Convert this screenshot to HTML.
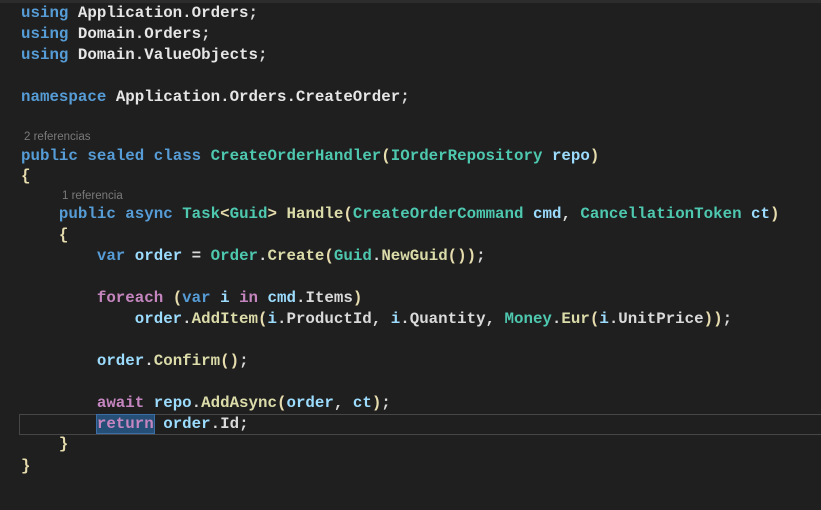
<!DOCTYPE html>
<html><head><meta charset="utf-8"><style>
html,body{margin:0;padding:0;background:#1f1f1f;width:821px;height:510px;overflow:hidden;position:relative}
.top{position:absolute;left:0;top:0;width:821px;height:3px;background:#2c2c2c}
.l{position:absolute;left:21px;font-family:"Liberation Mono",monospace;font-size:15.8px;font-weight:bold;line-height:21px;height:21px;white-space:pre;color:#dadada;letter-spacing:0}
.cl{position:absolute;font-family:"Liberation Sans",sans-serif;font-size:11.5px;color:#7a7a7a;white-space:pre}
.k{color:#569cd6}.t{color:#4ec9b0}.m{color:#dcdcaa}.v{color:#9cdcfe}.c{color:#c586c0}.w{color:#e6e6e6}
.b1,.b2,.b3{color:#e6dcae}
.cur{position:absolute;left:19px;top:414px;width:810px;height:19px;border:1px solid #464646}
.sel{background:#264f78;outline:1px solid #3a6ea5}
</style></head><body>
<div class="top"></div>
<div class="cur"></div>
<div class="l" style="top:3px"><span class="k">using</span> <span class="w">Application.Orders</span>;</div>
<div class="l" style="top:24px"><span class="k">using</span> <span class="w">Domain.Orders</span>;</div>
<div class="l" style="top:45px"><span class="k">using</span> <span class="w">Domain.ValueObjects</span>;</div>
<div class="l" style="top:87px"><span class="k">namespace</span> <span class="w">Application.Orders.CreateOrder</span>;</div>
<div class="cl" style="left:24px;top:131px">2 referencias</div>
<div class="l" style="top:146px"><span class="k">public</span> <span class="k">sealed</span> <span class="k">class</span> <span class="t">CreateOrderHandler</span><span class="b1">(</span><span class="t">IOrderRepository</span> <span class="v">repo</span><span class="b1">)</span></div>
<div class="l" style="top:166px"><span class="b1">{</span></div>
<div class="cl" style="left:62px;top:190px">1 referencia</div>
<div class="l" style="top:204px">    <span class="k">public</span> <span class="k">async</span> <span class="t">Task</span><span class="b2">&lt;</span><span class="t">Guid</span><span class="b2">&gt;</span> <span class="m">Handle</span><span class="b2">(</span><span class="t">CreateOrderCommand</span> <span class="v">cmd</span>, <span class="t">CancellationToken</span> <span class="v">ct</span><span class="b2">)</span></div>
<div class="l" style="top:225px">    <span class="b2">{</span></div>
<div class="l" style="top:246px">        <span class="k">var</span> <span class="v">order</span> = <span class="t">Order</span>.<span class="m">Create</span><span class="b3">(</span><span class="t">Guid</span>.<span class="m">NewGuid</span><span class="b1">()</span><span class="b3">)</span>;</div>
<div class="l" style="top:288px">        <span class="c">foreach</span> <span class="b3">(</span><span class="k">var</span> <span class="v">i</span> <span class="c">in</span> <span class="v">cmd</span>.Items<span class="b3">)</span></div>
<div class="l" style="top:309px">            <span class="v">order</span>.<span class="m">AddItem</span><span class="b3">(</span><span class="v">i</span>.ProductId, <span class="v">i</span>.Quantity, <span class="t">Money</span>.<span class="m">Eur</span><span class="b1">(</span><span class="v">i</span>.UnitPrice<span class="b1">)</span><span class="b3">)</span>;</div>
<div class="l" style="top:351px">        <span class="v">order</span>.<span class="m">Confirm</span><span class="b3">()</span>;</div>
<div class="l" style="top:393px">        <span class="c">await</span> <span class="v">repo</span>.<span class="m">AddAsync</span><span class="b3">(</span><span class="v">order</span>, <span class="v">ct</span><span class="b3">)</span>;</div>
<div class="l" style="top:414px">        <span class="c sel">return</span> <span class="v">order</span>.Id;</div>
<div class="l" style="top:434px">    <span class="b2">}</span></div>
<div class="l" style="top:456px"><span class="b1">}</span></div>
</body></html>
